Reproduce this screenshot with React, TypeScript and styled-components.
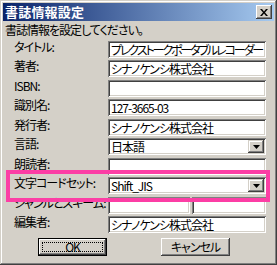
import React from "react";
import styled, { createGlobalStyle } from "styled-components";

const FONT = `"Noto Sans CJK JP", "Noto Sans", sans-serif`;

const Global = createGlobalStyle`
  html, body { margin: 0; padding: 0; background: #d4d0c8; }
  body { font-family: ${FONT}; }
`;

const Window = styled.div`
  position: relative;
  box-sizing: border-box;
  width: 277px;
  height: 265px;
  padding: 3px;
  background: #d4d0c8;
  box-shadow: inset -1px -1px #404040, inset 1px 1px #d4d0c8,
    inset -2px -2px #808080, inset 2px 2px #ffffff;
  display: flex;
  flex-direction: column;
  font-family: ${FONT};
  font-feature-settings: "palt";
  font-size: 12px;
  letter-spacing: -1px;
  color: #000;
  overflow: hidden;
`;

const TitleBar = styled.div`
  height: 18px;
  display: flex;
  align-items: center;
  justify-content: space-between;
  padding: 0 2px 0 2px;
  background: linear-gradient(to right, #0a246a, #a6caf0);
`;

const TitleText = styled.span`
  color: #fff;
  font-weight: bold;
  font-size: 13px;
  line-height: 18px;
  letter-spacing: 0.2px;
`;

const CloseButton = styled.div`
  width: 16px;
  height: 14px;
  background: #d4d0c8;
  box-shadow: inset -1px -1px #404040, inset 1px 1px #ffffff,
    inset -2px -2px #808080, inset 2px 2px #d4d0c8;
  display: flex;
  align-items: center;
  justify-content: center;
`;

const Body = styled.div`
  display: flex;
  flex-direction: column;
  padding: 0 0 0 2px;
`;

const Intro = styled.div`
  box-sizing: border-box;
  height: 20px;
  padding-top: 1.5px;
  line-height: 14px;
  font-size: 12px;
  white-space: nowrap;
`;

const Form = styled.div`
  display: grid;
  grid-template-columns: 94px 158px;
  grid-auto-rows: 17px;
  row-gap: 2.45px;
  margin-left: 9px;
`;

const Label = styled.div`
  padding-top: 1px;
  font-size: 12px;
  line-height: 10px;
  white-space: nowrap;
`;

const Field = styled.div<{ $w?: number; $tight?: boolean }>`
  box-sizing: border-box;
  height: 17px;
  ${(p) => (p.$w ? `width: ${p.$w}px;` : "")}
  background: #fff;
  box-shadow: inset 1px 1px #808080, inset -1px -1px #ffffff,
    inset 2px 2px #404040, inset -2px -2px #d4d0c8;
  padding: 0 2px 0 3px;
  font-size: 12px;
  line-height: 17px;
  letter-spacing: ${(p) => (p.$tight ? "-2.1px" : "-1px")};
  white-space: nowrap;
  overflow: hidden;
  display: flex;
  align-items: center;
`;

const FieldText = styled.span`
  flex: 1;
  overflow: hidden;
`;

const DropButton = styled.div`
  width: 16px;
  height: 13px;
  background: #d4d0c8;
  box-shadow: inset -1px -1px #404040, inset 1px 1px #d4d0c8,
    inset -2px -2px #808080, inset 2px 2px #ffffff;
  display: flex;
  align-items: center;
  justify-content: center;
  flex: none;
`;

const Pair = styled.div`
  display: flex;
  gap: 2px;
`;

const ButtonRow = styled.div`
  display: flex;
  gap: 54px;
  margin: 5px 0 0 33px;
`;

const Button = styled.div<{ $default?: boolean }>`
  position: relative;
  box-sizing: border-box;
  width: 69px;
  height: 18px;
  background: #d4d0c8;
  display: flex;
  align-items: center;
  justify-content: center;
  font-size: 12px;
  line-height: 16px;
  box-shadow: ${(p) =>
    p.$default
      ? "inset 0 0 0 1px #000, inset -2px -2px #404040, inset 2px 2px #ffffff, inset -3px -3px #808080"
      : "inset -1px -1px #404040, inset 1px 1px #ffffff, inset -2px -2px #808080, inset 2px 2px #d4d0c8"};
`;

const Focus = styled.div`
  position: absolute;
  left: 4px;
  top: 4px;
  right: 4px;
  bottom: 4px;
  border: 1px dotted #000;
`;

const Highlight = styled.div`
  position: absolute;
  left: 6px;
  top: 170px;
  width: 264px;
  height: 32px;
  box-sizing: border-box;
  border: 4px solid #fc3ea5;
  pointer-events: none;
`;

const Arrow = () => (
  <svg width="7" height="4" viewBox="0 0 7 4">
    <path d="M0 0h7L3.5 4z" fill="#000" />
  </svg>
);

const CloseX = () => (
  <svg width="8" height="7" viewBox="0 0 8 7">
    <path
      d="M0 0h2l2 2.5L6 0h2L5 3.5 8 7H6L4 4.5 2 7H0l3-3.5z"
      fill="#000"
    />
  </svg>
);

const TextRow = ({
  label,
  value,
  tight,
}: {
  label: string;
  value: string;
  tight?: boolean;
}) => (
  <>
    <Label>{label}</Label>
    <Field $tight={tight}>
      <FieldText>{value}</FieldText>
    </Field>
  </>
);

const SelectRow = ({ label, value }: { label: string; value: string }) => (
  <>
    <Label>{label}</Label>
    <Field>
      <FieldText>{value}</FieldText>
      <DropButton>
        <Arrow />
      </DropButton>
    </Field>
  </>
);

export default function App() {
  return (
    <>
      <Global />
      <Window>
        <TitleBar>
          <TitleText>書誌情報設定</TitleText>
          <CloseButton>
            <CloseX />
          </CloseButton>
        </TitleBar>
        <Body>
          <Intro>書誌情報を設定してください。</Intro>
          <Form>
            <TextRow
              label="タイトル:"
              value="プレクストークポータブルレコーダー"
              tight
            />
            <TextRow label="著者:" value="シナノケンシ株式会社" />
            <TextRow label="ISBN:" value="" />
            <TextRow label="識別名:" value="127-3665-03" />
            <TextRow label="発行者:" value="シナノケンシ株式会社" />
            <SelectRow label="言語:" value="日本語" />
            <TextRow label="朗読者:" value="" />
            <SelectRow label="文字コードセット:" value="Shift_JIS" />
            <Label>ジャンルとスキーム:</Label>
            <Pair>
              <Field $w={82} />
              <Field $w={74} />
            </Pair>
            <TextRow label="編集者:" value="シナノケンシ株式会社" />
          </Form>
          <ButtonRow>
            <Button $default>
              <Focus />
              OK
            </Button>
            <Button>キャンセル</Button>
          </ButtonRow>
        </Body>
        <Highlight />
      </Window>
    </>
  );
}
